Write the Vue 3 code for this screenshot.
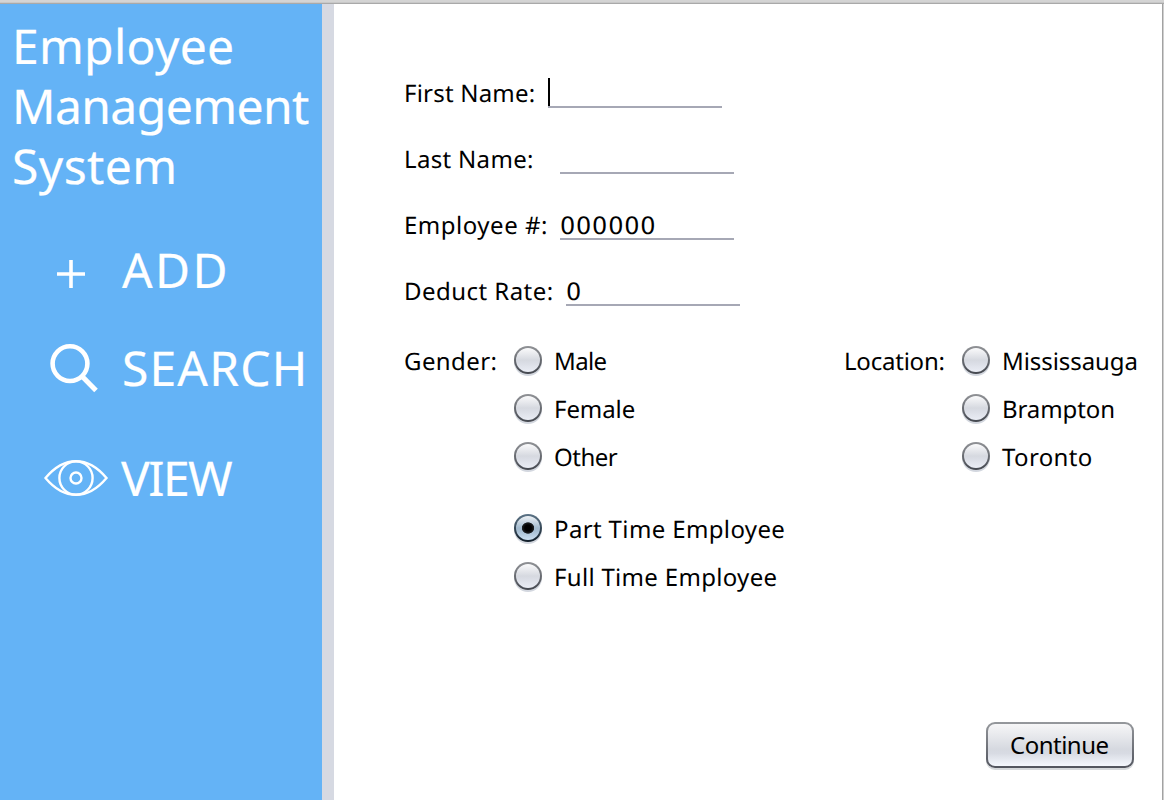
<script setup>
const title = [
  { text: 'Employee', w: 220 },
  { text: 'Management', w: 297 },
  { text: 'System', w: 161.3 },
]
const fields = [
  { label: 'First Name:', w: 129.7, size: 'short', value: '', caret: true },
  { label: 'Last Name:', w: 128, size: 'mid', value: '' },
  { label: 'Employee #:', w: 142, size: 'mid', value: '000000', vw: 94.3 },
  { label: 'Deduct Rate:', w: 147.7, size: 'long', value: '0', vw: 13 },
]
const genders = [
  { text: 'Male', w: 52.6 },
  { text: 'Female', w: 80.7 },
  { text: 'Other', w: 63.8 },
]
const kinds = [
  { text: 'Part Time Employee', w: 230.3, on: true },
  { text: 'Full Time Employee', w: 222.5 },
]
const locations = [
  { text: 'Mississauga', w: 134.5 },
  { text: 'Brampton', w: 111.2 },
  { text: 'Toronto', w: 89.8 },
]

// Tracks a text out so that its ink ends at the given width.
const ctx = document.createElement('canvas').getContext('2d')
const vFit = {
  mounted(el, { value }) {
    const text = el.textContent.trim()
    if (text.length < 2) return
    const cs = getComputedStyle(el)
    ctx.font = `${cs.fontSize} ${cs.fontFamily}`
    const natural = ctx.measureText(text).actualBoundingBoxRight
    el.style.letterSpacing = `${(value - natural) / (text.length - 1)}px`
  },
}
</script>

<template>
  <div class="window">
    <div class="topbar"></div>
    <div class="body">
      <aside class="side">
        <h1 class="title">
          <span v-for="t in title" :key="t.text" v-fit="t.w">{{ t.text }}</span>
        </h1>
        <nav class="nav">
          <a class="item add">
            <svg class="icon" width="78" height="60" viewBox="0 0 78 60">
              <path d="M13 33h28M27 19v28" stroke="#fff" stroke-width="3.6" fill="none" />
            </svg>
            <span v-fit="103.5">ADD</span>
          </a>
          <a class="item search">
            <svg class="icon" width="78" height="60" viewBox="0 0 78 60">
              <circle cx="26" cy="24.6" r="17.4" stroke="#fff" stroke-width="4.6" fill="none" />
              <path d="M38 37.200 52 51.500" stroke="#fff" stroke-width="5" fill="none" />
            </svg>
            <span v-fit="180.7">SEARCH</span>
          </a>
          <a class="item view">
            <svg class="icon" width="77" height="60" viewBox="0 0 77 60">
              <g stroke="#fff" stroke-width="2.4" fill="none">
                <path d="M1.500 29C9 20 20 12.200 32 12.200S55 20 62.500 29C55 38 44 45.800 32 45.800S9 38 1.500 29Z" />
                <circle cx="32" cy="29" r="16.600" />
                <circle cx="32" cy="29" r="5.500" />
              </g>
            </svg>
            <span v-fit="112">VIEW</span>
          </a>
        </nav>
      </aside>
      <div class="divider"></div>
      <main class="form">
        <div v-for="f in fields" :key="f.label" class="row" :class="f.size">
          <label v-fit="f.w">{{ f.label }}</label>
          <div class="field">
            <i v-if="f.caret" class="caret"></i>
            <span v-if="f.value" v-fit="f.vw" class="value">{{ f.value }}</span>
          </div>
        </div>
        <div class="choices">
          <div v-fit="91.5" class="gl">Gender:</div>
          <div class="left">
            <div v-for="o in genders" :key="o.text" class="opt">
              <b class="radio"></b><span v-fit="o.w">{{ o.text }}</span>
            </div>
            <div class="kinds">
              <div v-for="o in kinds" :key="o.text" class="opt">
                <b class="radio" :class="{ on: o.on }"></b><span v-fit="o.w">{{ o.text }}</span>
              </div>
            </div>
          </div>
          <div v-fit="99.5" class="ll">Location:</div>
          <div class="right">
            <div v-for="o in locations" :key="o.text" class="opt">
              <b class="radio"></b><span v-fit="o.w">{{ o.text }}</span>
            </div>
          </div>
        </div>
        <button class="go"><span v-fit="98.5">Continue</span></button>
      </main>
      <div class="edge"></div>
    </div>
  </div>
</template>

<style>
body { margin: 0; overflow: hidden; }
</style>

<style scoped>
.window {
  width: 1164px; height: 800px; display: flex; flex-direction: column;
  overflow: hidden; background: #fff; color: #000;
  font-family: "Noto Sans", "Open Sans", sans-serif; font-size: 24px; line-height: 28px;
  text-rendering: geometricPrecision; white-space: nowrap;
}
.window * { box-sizing: border-box; }
.topbar { height: 4px; flex: none; background: linear-gradient(#d4d4d4 0 2px, #c8c8c8 2px 3px, #a9a9a9 3px); }
.body { flex: 1; display: flex; min-height: 0; }
.side {
  width: 322px; flex: none; background: #64b3f6; color: #fff;
  font-size: 48px; line-height: 60px; -webkit-text-stroke: 0.2px #fff;
}
.title { margin: 0; padding: 13px 0 0 12px; font-size: 48px; font-weight: 400; line-height: 60px; }
.title span { display: block; }
.nav { display: flex; flex-direction: column; }
.item { display: flex; height: 60px; }
.icon { flex: none; }
.add { padding-left: 44px; margin-top: 44px; }
.search { padding-left: 44px; margin-top: 38px; }
.view { padding-left: 44px; margin-top: 50px; }
.divider { width: 12px; flex: none; background: #d6d9e2; }
.form { flex: 1; display: flex; flex-direction: column; padding: 74px 0 0 70px; }
.row { display: flex; height: 30px; margin-bottom: 36px; align-items: flex-start; }
.row label { flex: none; width: 144px; padding-top: 2px; }
.row.mid label { width: 156px; }
.row.long label { width: 162px; }
.field { width: 174px; height: 30px; padding-top: 2px; border-bottom: 2px solid #a6a8b5; }
.value { display: block; font-family: "DejaVu Sans", sans-serif; line-height: 29px; }
.caret { display: block; width: 2px; height: 28px; margin-top: -2px; background: #000; }
.choices { display: flex; margin-top: 6px; height: 250px; }
.gl { width: 110px; }
.left { width: 330px; }
.ll { width: 118px; }
.opt { display: flex; height: 48px; }
.kinds { margin-top: 24px; }
.radio {
  width: 28px; height: 28px; margin: -2px 12px 0 0; flex: none; border-radius: 50%;
  border: 2px solid transparent;
  background: linear-gradient(#fafafb, #d6d9e0 50%, #d9dce4 60%, #eaedf5) padding-box,
    linear-gradient(#919397, #43474f) border-box;
  box-shadow: 0 2px 0 #d3d7df;
}
.radio.on {
  background: radial-gradient(ellipse 6.500px 6px at 12px 12px, #000 50%, #1c1f22 88%, transparent 100%) padding-box,
    linear-gradient(#eef2f6, #a2bace 50%, #a9c0d4 65%, #cce0f2) padding-box,
    linear-gradient(#5c7487, #101d28) border-box;
}
.go {
  align-self: flex-end; margin: 124px 28px 0 0; width: 148px; height: 46px; padding: 0 0 1px 22px;
  flex: none; text-align: left; border: 2px solid transparent; border-radius: 9px; color: #000;
  font: inherit; line-height: 41px;
  background: linear-gradient(#f6f6f7, #d6d9e0 60%, #d8dbe3 70%, #f5f8fe) padding-box,
    linear-gradient(#95989c, #52555e) border-box;
  box-shadow: 0 2px 0 #d6d9dc;
}
.edge { width: 2px; flex: none; background: linear-gradient(90deg, #a2a2a2 50%, #cfcfcf 50%); }
</style>
